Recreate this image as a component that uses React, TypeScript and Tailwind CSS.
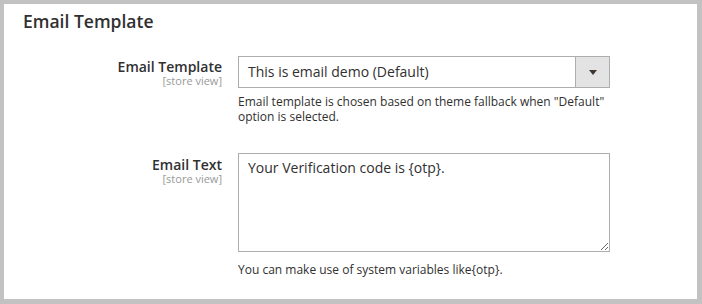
const FONT = { fontFamily: '"Open Sans", "Noto Sans", sans-serif' };

function Label({ title, top }: { title: string; top: string }) {
  return (
    <div className={`w-[218px] shrink-0 text-right ${top}`}>
      <div className="text-[14px] font-semibold leading-[17px] text-[#303030]">{title}</div>
      <div className="text-[11px] leading-[12px] text-[#999]">[store view]</div>
    </div>
  );
}

export default function App() {
  return (
    <div className="w-[702px] h-[304px] bg-[#c2c2c2] p-[4px] pr-[5px] pb-[5px]" style={FONT}>
      <div className="h-full bg-white pt-[5px]">
        <h2 className="pl-[19px] text-[17.5px] font-semibold leading-[24px] text-[#303030]">
          Email Template
        </h2>

        <div className="mt-[23px] flex">
          <Label title="Email Template" top="pt-[2px]" />
          <div className="ml-[16px] w-[372px]">
            <div className="flex h-[32px] border border-[#adadad] bg-white">
              <div className="flex-1 pl-[9px] text-[14px] leading-[29px] text-[#303030]">
                This is email demo (Default)
              </div>
              <div className="flex w-[34px] items-center justify-center border-l border-[#adadad] bg-[#e3e3e3]">
                <svg width="8" height="5" viewBox="0 0 8 5">
                  <path d="M0 0h8L4 5z" fill="#41362f" />
                </svg>
              </div>
            </div>
            <p className="mt-[6px] text-[12px] leading-[15px] text-[#303030]">
              Email template is chosen based on theme fallback when "Default" option is selected.
            </p>
          </div>
        </div>

        <div className="mt-[29px] flex">
          <Label title="Email Text" top="pt-[3px]" />
          <div className="ml-[16px] w-[372px]">
            <textarea
              className="block h-[99px] w-full resize-y border border-[#adadad] px-[9px] pt-[4px] text-[14px] leading-[20px] text-[#303030] outline-none"
              defaultValue="Your Verification code is {otp}."
            />
            <p className="mt-[10px] text-[12px] leading-[15px] text-[#303030]">
              You can make use of system variables like{"{otp}"}.
            </p>
          </div>
        </div>
      </div>
    </div>
  );
}
